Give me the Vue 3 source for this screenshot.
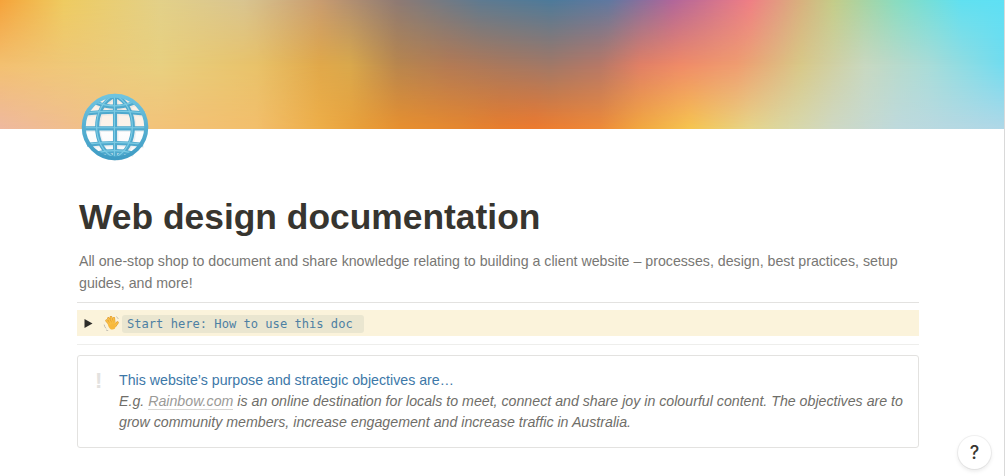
<script setup>
const gridLines = [
  'M50 4 V96',
  'M50 4 C15 18 15 82 50 96',
  'M50 4 C85 18 85 82 50 96',
  'M22 14 Q50 26 78 14',
  'M7 30 Q50 25 93 30',
  'M4 52 H96',
  'M9 76 Q50 71 91 76',
  'M24 89 Q50 82 76 89',
]
const fingers = [
  { d: 'M7 9.5 L3.6 5.6' },
  { d: 'M8 8.5 L5.4 3.4' },
  { d: 'M9.6 8 L8 2.2' },
  { d: 'M11.2 8.4 L10.8 3.2' },
  { d: 'M12.4 10.6 L14.4 7.6' },
]
</script>

<template>
  <div class="page">
    <header class="cover">
      <div class="layer mid"></div>
      <div class="layer top"></div>
    </header>
    <main class="content">
      <svg class="globe" viewBox="0 0 100 100" aria-hidden="true">
        <defs>
          <linearGradient id="tube" x1="0" y1="0" x2="0" y2="1">
            <stop offset="0" stop-color="#6fc4e0" />
            <stop offset="1" stop-color="#3f9cc4" />
          </linearGradient>
          <linearGradient id="glass" x1="0" y1="0" x2="0" y2="1">
            <stop offset="0" stop-color="#fdf1e6" />
            <stop offset=".5" stop-color="#fdf3ea" />
            <stop offset=".52" stop-color="#ffffff" />
            <stop offset="1" stop-color="#f6f7f8" />
          </linearGradient>
        </defs>
        <circle cx="50" cy="50" r="47" fill="url(#glass)" />
        <g fill="none" stroke="#cfd8de" stroke-width="7.5" opacity=".35" transform="translate(1.5 1.5)">
          <path v-for="d in gridLines" :key="d" :d="d" />
        </g>
        <g fill="none" stroke="#4fa9cd" stroke-width="6">
          <path v-for="d in gridLines" :key="d" :d="d" />
        </g>
        <g fill="none" stroke="#7ccbe4" stroke-width="1.8" transform="translate(-.8 -.9)">
          <path v-for="d in gridLines" :key="d" :d="d" />
        </g>
        <circle cx="50" cy="50" r="46" fill="none" stroke="url(#tube)" stroke-width="6" />
      </svg>
      <h1 class="title">Web design documentation</h1>
      <p class="intro">All one-stop shop to document and share knowledge relating to building a client website – processes, design, best practices, setup guides, and more!</p>
      <hr class="rule" />
      <div class="toggle">
        <svg class="caret" viewBox="0 0 9 9" aria-hidden="true"><path d="M.5 0 L8.5 4.5 L.5 9Z" fill="#2e2d29" /></svg>
        <svg class="wave" viewBox="0 0 16 16" aria-hidden="true">
          <path d="M1.2 9.6 Q1.4 11.8 3 13.4 M3 14.9 Q4 15.6 5.2 15.7" stroke="#b9b6ad" stroke-width=".9" fill="none" />
          <path d="M13.2 1.6 Q14.8 2.4 15.3 4" stroke="#b9b6ad" stroke-width=".8" fill="none" />
          <g stroke-linecap="round" fill="none">
            <path v-for="f in fingers" :key="f.d" :d="f.d" stroke="#d98f24" stroke-width="2.5" />
          </g>
          <path d="M5.4 8.4 Q8 6.2 12.6 8 Q13.8 11.4 11.8 13.8 Q9 15.6 6.8 13.4 Q5.2 11.4 4.8 9.4Z" fill="#f7b93e" />
          <g stroke-linecap="round" fill="none">
            <path v-for="f in fingers" :key="f.d + 'top'" :d="f.d" stroke="#f9bf45" stroke-width="1.7" />
          </g>
        </svg>
        <code class="code">Start here: How to use this doc</code>
      </div>
      <hr class="rule after" />
      <section class="callout">
        <span class="mark">!</span>
        <div class="callout-text">
          <div class="lead">This website’s purpose and strategic objectives are…</div>
          <div class="example">E.g. <span class="link">Rainbow.com</span> is an online destination for locals to meet, connect and share joy in colourful content. The objectives are to grow community members, increase engagement and increase traffic in Australia.</div>
        </div>
      </section>
    </main>
    <button class="help" type="button">?</button>
    <div class="scroll-edge"></div>
  </div>
</template>

<style>
html, body { margin: 0; background: #fff; overflow: hidden; }
</style>

<style scoped>
.page {
  position: relative;
  width: 1005px;
  height: 476px;
  overflow: hidden;
  font-family: "Liberation Sans", Arial, sans-serif;
  color: #37352f;
  background: #fff;
}
.cover {
  position: relative;
  height: 129px;
  background: linear-gradient(90deg, #efb9a0 0, #f3c47e 128px, #f3bf6c 256px, #eeae48 320px, #e99f3a 360px, #e8902f 400px, #e6872f 460px, #e97d2d 500px, #ee7a2e 535px, #ef8a38 600px, #f2a840 640px, #f6c550 690px, #e6d58a 750px, #dcd8a0 780px, #cfd9c4 833px, #bfdadd 897px, #b0d8e8 1005px);
}
.layer { position: absolute; inset: 0; }
.mid {
  background: linear-gradient(90deg, #f3c070 0, #efc878 64px, #e8d080 160px, #e8c26a 256px, #e0a84a 320px, #d9a84c 350px, #b8864e 397px, #b27a55 450px, #a8785e 500px, #a07868 550px, #b57868 600px, #e07f66 640px, #ef8a68 680px, #ef9c70 737px, #d8c888 801px, #c8d8c0 865px, #a8dcd8 929px, #70dcf0 1005px);
  -webkit-mask-image: linear-gradient(180deg, #000 50%, transparent 100%);
  mask-image: linear-gradient(180deg, #000 50%, transparent 100%);
}
.top {
  background: linear-gradient(90deg, #f5a23a 0, #eecb60 64px, #e2d088 160px, #d8c490 244px, #c89c70 320px, #8d7a74 397px, #5e7a90 480px, #4d7a9a 551px, #5f78a0 609px, #b0669a 673px, #ef7e84 750px, #d8b07e 801px, #c4cc88 833px, #88dcc0 897px, #60e0f0 961px, #5ee0f4 1005px);
  -webkit-mask-image: linear-gradient(180deg, #000 0, transparent 50%);
  mask-image: linear-gradient(180deg, #000 0, transparent 50%);
}
.content {
  width: 842px;
  margin-left: 77px;
}
.globe {
  display: block;
  width: 68px;
  height: 68px;
  margin: -36px 0 0 4px;
  position: relative;
}
.title {
  margin: 34px 0 0;
  padding-left: 2px;
  font-size: 35.4px;
  line-height: 44px;
  font-weight: 700;
  color: #37352f;
}
.intro {
  margin: 11px 0 0;
  padding: 0 2px;
  font-size: 14.2px;
  line-height: 22px;
  color: #787774;
}
.rule {
  margin: 8px 0 0;
  border: 0;
  border-top: 1px solid #e3e2e0;
}
.rule.after { margin-top: 8px; border-color: #eeeeec; }
.toggle {
  display: flex;
  align-items: center;
  height: 26px;
  margin-top: 7px;
  background: #fbf3db;
}
.caret { width: 9px; height: 9px; margin-left: 7px; }
.wave { width: 16px; height: 16px; margin-left: 10px; }
.code {
  margin: 2px 0 0 3px;
  padding: 0 11px 0 5px;
  height: 18px;
  line-height: 18px;
  font-family: "DejaVu Sans Mono", monospace;
  font-size: 12.1px;
  color: #4d80a3;
  background: #eae6d0;
  border-radius: 3px;
}
.callout {
  display: flex;
  margin-top: 10px;
  padding: 14px 15px 14px 16px;
  border: 1px solid #e3e2e0;
  border-radius: 3px;
}
.mark {
  width: 25px;
  padding-left: 1px;
  box-sizing: border-box;
  font-size: 22px;
  line-height: 22px;
  font-weight: 700;
  color: #e3e2e0;
}
.callout-text { flex: 1; font-size: 14.2px; line-height: 21px; }
.lead { color: #3d78a8; }
.example { font-style: italic; color: #6f6e69; }
.link { color: #9b9a97; border-bottom: 1px solid #d8d7d4; }
.help {
  position: absolute;
  right: 14px;
  bottom: 7px;
  width: 33px;
  height: 33px;
  padding: 0;
  border: 0;
  border-radius: 50%;
  background: #fff;
  box-shadow: 0 0 0 1px rgba(15, 15, 15, 0.05), 0 2px 4px rgba(15, 15, 15, 0.1);
  font: 500 18px Inter, "Liberation Sans", sans-serif;
  color: #37352f;
}
.scroll-edge {
  position: absolute;
  top: 0;
  right: 0;
  bottom: 0;
  width: 1px;
  background: #d9d9d9;
}
</style>
